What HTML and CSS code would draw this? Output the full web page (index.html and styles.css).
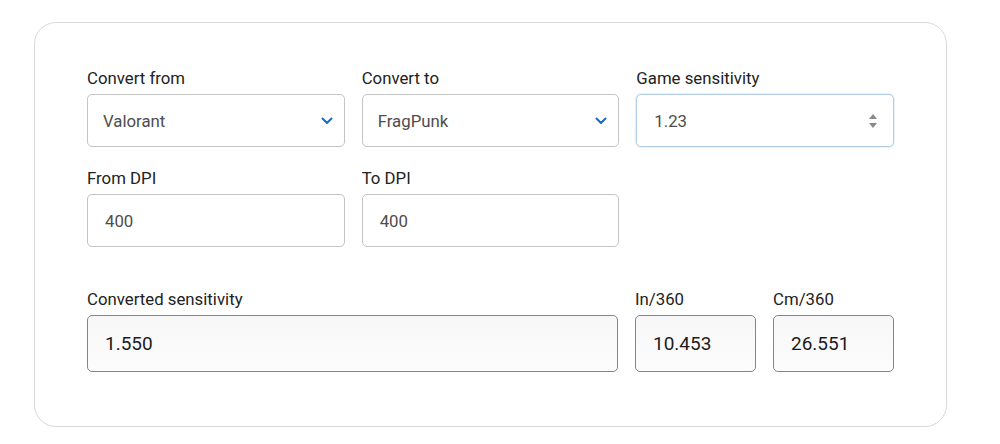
FILE: index.html
```html
<!DOCTYPE html>
<html lang="en">
<head>
    <meta charset="UTF-8">
    <meta name="viewport" content="width=device-width, initial-scale=1.0">
    <title>Sensitivity Converter</title>
    <link rel="stylesheet" href="styles.css">
</head>
<body>
    <main class="card">
        <div class="row row-3">
            <div class="field">
                <label for="from">Convert from</label>
                <div class="select-wrap">
                    <select id="from" class="control">
                        <option>Valorant</option>
                    </select>
                    <svg class="chevron" width="12" height="8" viewBox="0 0 12 8"><path d="M1.5 1.5 L6 6 L10.5 1.5" fill="none" stroke="#1a68c8" stroke-width="2" stroke-linecap="round" stroke-linejoin="round"/></svg>
                </div>
            </div>
            <div class="field">
                <label for="to">Convert to</label>
                <div class="select-wrap">
                    <select id="to" class="control">
                        <option>FragPunk</option>
                    </select>
                    <svg class="chevron" width="12" height="8" viewBox="0 0 12 8"><path d="M1.5 1.5 L6 6 L10.5 1.5" fill="none" stroke="#1a68c8" stroke-width="2" stroke-linecap="round" stroke-linejoin="round"/></svg>
                </div>
            </div>
            <div class="field">
                <label for="sens">Game sensitivity</label>
                <div class="select-wrap">
                    <input type="number" id="sens" class="control control-input focused" value="1.23" step="0.01">
                    <svg class="spinner" width="10" height="16" viewBox="0 0 10 16"><path d="M5 1 L9 6 L1 6 Z" fill="#8a8a8a"/><path d="M1 10 L9 10 L5 15 Z" fill="#8a8a8a"/></svg>
                </div>
            </div>
        </div>

        <div class="row row-3">
            <div class="field">
                <label for="fromDpi">From DPI</label>
                <input type="text" id="fromDpi" class="control control-input" value="400">
            </div>
            <div class="field">
                <label for="toDpi">To DPI</label>
                <input type="text" id="toDpi" class="control control-input" value="400">
            </div>
        </div>

        <div class="row row-result">
            <div class="field">
                <label for="result">Converted sensitivity</label>
                <input type="text" id="result" class="control output" value="1.550" readonly>
            </div>
            <div class="field">
                <label for="in360">In/360</label>
                <input type="text" id="in360" class="control output" value="10.453" readonly>
            </div>
            <div class="field">
                <label for="cm360">Cm/360</label>
                <input type="text" id="cm360" class="control output" value="26.551" readonly>
            </div>
        </div>
    </main>
</body>
</html>
```

FILE: styles.css
```css
:root {
    --texto: #222;
    --texto-input: #4d4d4d;
    --borda: #c4c4c4;
    --borda-card: #d9d9d9;
    --borda-saida: #858585;
    --foco: #b3cde8;
}

* {
    box-sizing: border-box;
}

body {
    margin: 0;
    padding: 22px 0 0 34px;
    background: #fff;
    font-family: Roboto, "Liberation Sans", Arial, sans-serif;
    color: var(--texto);
}

.card {
    width: 913px;
    border: 1px solid var(--borda-card);
    border-radius: 22px;
    padding: 45px 52px 54px 52px;
    display: flex;
    flex-direction: column;
    gap: 21px;
}

.row {
    display: grid;
    column-gap: 17px;
}

.row-3 {
    grid-template-columns: repeat(3, 1fr);
}

.row-result {
    grid-template-columns: 1fr 121px 121px;
    margin-top: 21px;
}

.field {
    display: flex;
    flex-direction: column;
    gap: 6px;
}

label {
    font-size: 16.8px;
    line-height: 20px;
    color: var(--texto);
}

.control {
    width: 100%;
    height: 53px;
    border: 1px solid var(--borda);
    border-radius: 5px;
    background: #fff;
    font-family: inherit;
    font-size: 16.8px;
    color: var(--texto-input);
    padding: 0 15px;
    outline: none;
    appearance: none;
    -webkit-appearance: none;
    margin: 0;
}

.control-input {
    padding-left: 17px;
}

.focused {
    border-color: var(--foco);
    box-shadow: 0 0 0 1px rgba(179, 205, 232, 0.3);
}

input[type=number]::-webkit-inner-spin-button,
input[type=number]::-webkit-outer-spin-button {
    -webkit-appearance: none;
    margin: 0;
}

.select-wrap {
    position: relative;
}

.chevron {
    position: absolute;
    right: 12px;
    top: 23px;
    pointer-events: none;
}

.spinner {
    position: absolute;
    right: 16px;
    top: 19px;
    pointer-events: none;
}

.output {
    height: 57px;
    border-color: var(--borda-saida);
    background: linear-gradient(#f7f7f7, #fcfcfc);
    color: #1c1c1c;
    font-size: 19px;
    padding-left: 17px;
}
```
